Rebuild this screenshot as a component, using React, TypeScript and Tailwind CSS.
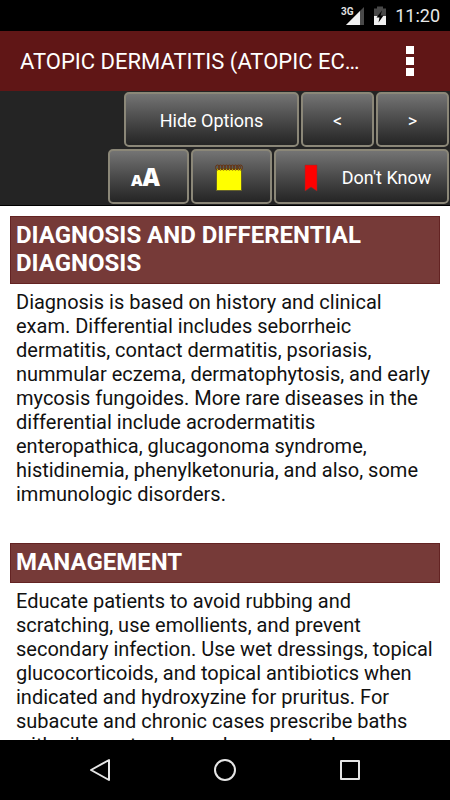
import type { ReactNode } from "react";

function StatusBar() {
  return (
    <div className="flex h-[31px] shrink-0 items-center justify-end bg-black pr-[10px] text-[#e8e8e8]">
      <svg className="h-5 w-6" viewBox="0 0 24 20" role="img" aria-label="3G signal">
        <path d="M23 1V19H5Z" fill="#4a4a4a" />
        <path d="M19 5V19H5Z" fill="#f0f0f0" />
        <text x="0" y="9" fontSize="10" fontWeight="700" fontFamily="Roboto, sans-serif" fill="#e0e0e0">3G</text>
      </svg>
      <svg className="ml-2 h-5 w-[14px]" viewBox="0 0 14 20" role="img" aria-label="Battery charging">
        <path d="M4 0.500h6v2h3V10H1V2.500h3z" fill="#484848" />
        <path d="M1 10h12v9H1z" fill="#f0f0f0" />
        <path d="M9 4.500L3.500 11.500H6.500L5.500 16.500L10.500 9.500H7.500Z" fill="#000" />
      </svg>
      <span className="ml-2 text-lg">11:20</span>
    </div>
  );
}

function TitleBar() {
  return (
    <header className="flex h-[60px] shrink-0 items-center bg-[#601616] pl-5 text-white">
      <h1 className="min-w-0 flex-1 truncate pt-[2px] text-[22px] leading-8">ATOPIC DERMATITIS (ATOPIC ECZEMA)</h1>
      <button type="button" aria-label="More options" className="ml-8 flex h-full w-12 flex-col items-start justify-center gap-[3px] pl-1">
        <span className="size-2 bg-white" />
        <span className="size-2 bg-white" />
        <span className="size-2 bg-white" />
      </button>
    </header>
  );
}

function OptionButton({ width, label, children }: { width: string; label?: string; children: ReactNode }) {
  return (
    <button
      type="button"
      aria-label={label}
      className={`flex h-[55px] items-center justify-center rounded-[5px] border-2 border-[#8b8778] bg-linear-to-b from-[#747474] to-[#252525] pt-[2px] text-lg text-white ${width}`}
    >
      {children}
    </button>
  );
}

function NotepadIcon() {
  return (
    <svg className="mr-[6px] h-7 w-7" viewBox="0 0 28 28" aria-hidden="true">
      <path d="M1.500 4.500h25v22h-25z" fill="#ffff00" stroke="#66632a" />
      <g fill="none" stroke="#663514">
        <ellipse cx="2.500" cy="3.500" rx="2" ry="2.500" />
        <ellipse cx="5.500" cy="3.500" rx="2" ry="2.500" />
        <ellipse cx="8.500" cy="3.500" rx="2" ry="2.500" />
        <ellipse cx="11.500" cy="3.500" rx="2" ry="2.500" />
        <ellipse cx="14.500" cy="3.500" rx="2" ry="2.500" />
        <ellipse cx="17.500" cy="3.500" rx="2" ry="2.500" />
        <ellipse cx="20.500" cy="3.500" rx="2" ry="2.500" />
        <ellipse cx="23.500" cy="3.500" rx="2" ry="2.500" />
        <ellipse cx="25.500" cy="3.500" rx="2" ry="2.500" />
      </g>
    </svg>
  );
}

function Options() {
  return (
    <div className="flex shrink-0 flex-col gap-[2px] border-b border-black bg-[#242424] pt-px pr-px pb-px">
      <div className="flex justify-end gap-[2px]">
        <OptionButton width="w-[175px]">Hide Options</OptionButton>
        <OptionButton width="w-[73px]" label="Previous">&lt;</OptionButton>
        <OptionButton width="w-[73px]" label="Next">&gt;</OptionButton>
      </div>
      <div className="flex justify-end gap-[2px]">
        <OptionButton width="w-[81px]" label="Text size">
          <span className="mr-[6px] flex items-baseline pt-[2px] font-['Open_Sans',sans-serif] font-extrabold">
            <span className="text-base leading-6">A</span>
            <span className="text-2xl leading-6">A</span>
          </span>
        </OptionButton>
        <OptionButton width="w-[81px]" label="Notes">
          <NotepadIcon />
        </OptionButton>
        <OptionButton width="w-[175px]">
          <svg className="mr-6 ml-3 h-7 w-[14px]" viewBox="0 0 14 28" aria-hidden="true">
            <path d="M1 1H13V27L7 23L1 27Z" fill="#ff0000" stroke="#803030" strokeWidth="0.500" />
          </svg>
          <span>Don't Know</span>
        </OptionButton>
      </div>
    </div>
  );
}

function Section({ title, children }: { title: string; children: ReactNode }) {
  return (
    <section>
      <h2 className="border border-[#632323] bg-[#763a38] px-[5px] pt-1 pb-[6px] text-2xl leading-7 font-bold text-white">
        {title}
      </h2>
      <p className="px-[6px] pt-[6px] text-xl leading-6 text-[#111111]">{children}</p>
    </section>
  );
}

function NavigationBar() {
  return (
    <nav className="flex h-[60px] shrink-0 items-center justify-center gap-[77px] bg-black">
      <button type="button" aria-label="Back" className="flex w-12 justify-center">
        <svg className="size-6" viewBox="0 0 24 24" fill="none" stroke="#e6e6e6" strokeWidth="2" strokeLinejoin="round">
          <path d="M21 2V22L3 12Z" />
        </svg>
      </button>
      <button type="button" aria-label="Home" className="flex w-12 justify-center">
        <svg className="size-6" viewBox="0 0 24 24" fill="none" stroke="#e6e6e6" strokeWidth="2">
          <circle cx="12" cy="12" r="10" />
        </svg>
      </button>
      <button type="button" aria-label="Recent apps" className="flex w-12 justify-center">
        <svg className="size-6" viewBox="0 0 24 24" fill="none" stroke="#e6e6e6" strokeWidth="2" strokeLinejoin="round">
          <path d="M3 3H21V21H3Z" />
        </svg>
      </button>
    </nav>
  );
}

export default function App() {
  return (
    <div className="flex h-screen flex-col overflow-hidden bg-white font-[Roboto,sans-serif]">
      <StatusBar />
      <TitleBar />
      <Options />
      <main className="flex min-h-0 flex-1 flex-col gap-[37px] overflow-hidden px-[10px] pt-[10px]">
        <Section title="DIAGNOSIS AND DIFFERENTIAL DIAGNOSIS">
          Diagnosis is based on history and clinical exam. Differential includes seborrheic dermatitis, contact
          dermatitis, psoriasis, nummular eczema, dermatophytosis, and early mycosis fungoides. More rare diseases in
          the differential include acrodermatitis enteropathica, glucagonoma syndrome, histidinemia, phenylketonuria,
          and also, some immunologic disorders.
        </Section>
        <Section title="MANAGEMENT">
          Educate patients to avoid rubbing and scratching, use emollients, and prevent secondary infection. Use wet
          dressings, topical glucocorticoids, and topical antibiotics when indicated and hydroxyzine for pruritus. For
          subacute and chronic cases prescribe baths with oil or oat and usual, evaporated
        </Section>
      </main>
      <NavigationBar />
    </div>
  );
}
